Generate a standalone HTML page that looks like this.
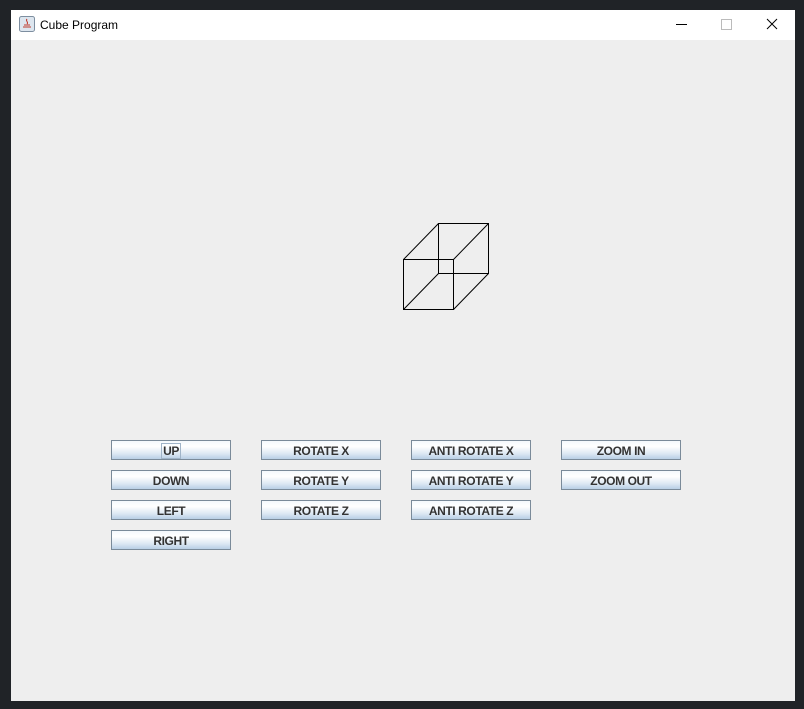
<html><head><style>
body{margin:0;width:804px;height:709px;background:#202327;position:relative;overflow:hidden;font-family:"Liberation Sans",sans-serif}
#tb{position:absolute;left:11px;top:10px;width:784px;height:30px;background:#fff}
#tb span{position:absolute;left:29px;top:8px;font-size:12px;color:#000}
#c{position:absolute;left:11px;top:40px;width:784px;height:661px;background:#eeeeee}
.b{position:absolute;width:118px;height:18px;border:1px solid #7a8a99;background:linear-gradient(#f4f8fc,#ffffff 30%,#dde8f3 70%,#b8cfe5);font-size:12px;font-weight:bold;color:#333;text-align:center;line-height:20px;letter-spacing:-0.4px}
.f{border:1px solid #a0b4c8;padding:0 1px}
</style></head><body>
<div id="tb">
<svg style="position:absolute;left:8px;top:6px" width="16" height="16"><rect x="0.5" y="0.5" width="15" height="15" rx="2" fill="#dde6ef" stroke="#7d8ea0"/><path d="M4 11h8M5 9h6M8 3c-2 2 2 3 0 5" stroke="#c0392b" fill="none"/></svg>
<span>Cube Program</span>
<div style="position:absolute;left:665px;top:14px;width:11px;height:1px;background:#000"></div>
<div style="position:absolute;left:710px;top:9px;width:9px;height:9px;border:1px solid #bbb"></div>
<svg style="position:absolute;left:755px;top:8px" width="12" height="12"><path d="M1 1L11 11M11 1L1 11" stroke="#000"/></svg>
</div>
<div id="c"></div>
<svg style="position:absolute;left:0;top:0" width="804" height="709"><g stroke="#000" fill="none" stroke-width="1">
<rect x="403.5" y="259.5" width="50" height="50"/><rect x="438.5" y="223.5" width="50" height="50"/>
<path d="M403.5 259.5L438.5 223.5M453.5 259.5L488.5 223.5M453.5 309.5L488.5 273.5M403.5 309.5L438.5 273.5"/></g></svg>
<div class="b" style="left:111px;top:440px"><span class="f">UP</span></div>
<div class="b" style="left:111px;top:470px">DOWN</div>
<div class="b" style="left:111px;top:500px">LEFT</div>
<div class="b" style="left:111px;top:530px">RIGHT</div>
<div class="b" style="left:261px;top:440px">ROTATE X</div>
<div class="b" style="left:261px;top:470px">ROTATE Y</div>
<div class="b" style="left:261px;top:500px">ROTATE Z</div>
<div class="b" style="left:411px;top:440px">ANTI ROTATE X</div>
<div class="b" style="left:411px;top:470px">ANTI ROTATE Y</div>
<div class="b" style="left:411px;top:500px">ANTI ROTATE Z</div>
<div class="b" style="left:561px;top:440px">ZOOM IN</div>
<div class="b" style="left:561px;top:470px">ZOOM OUT</div>
</body></html>
